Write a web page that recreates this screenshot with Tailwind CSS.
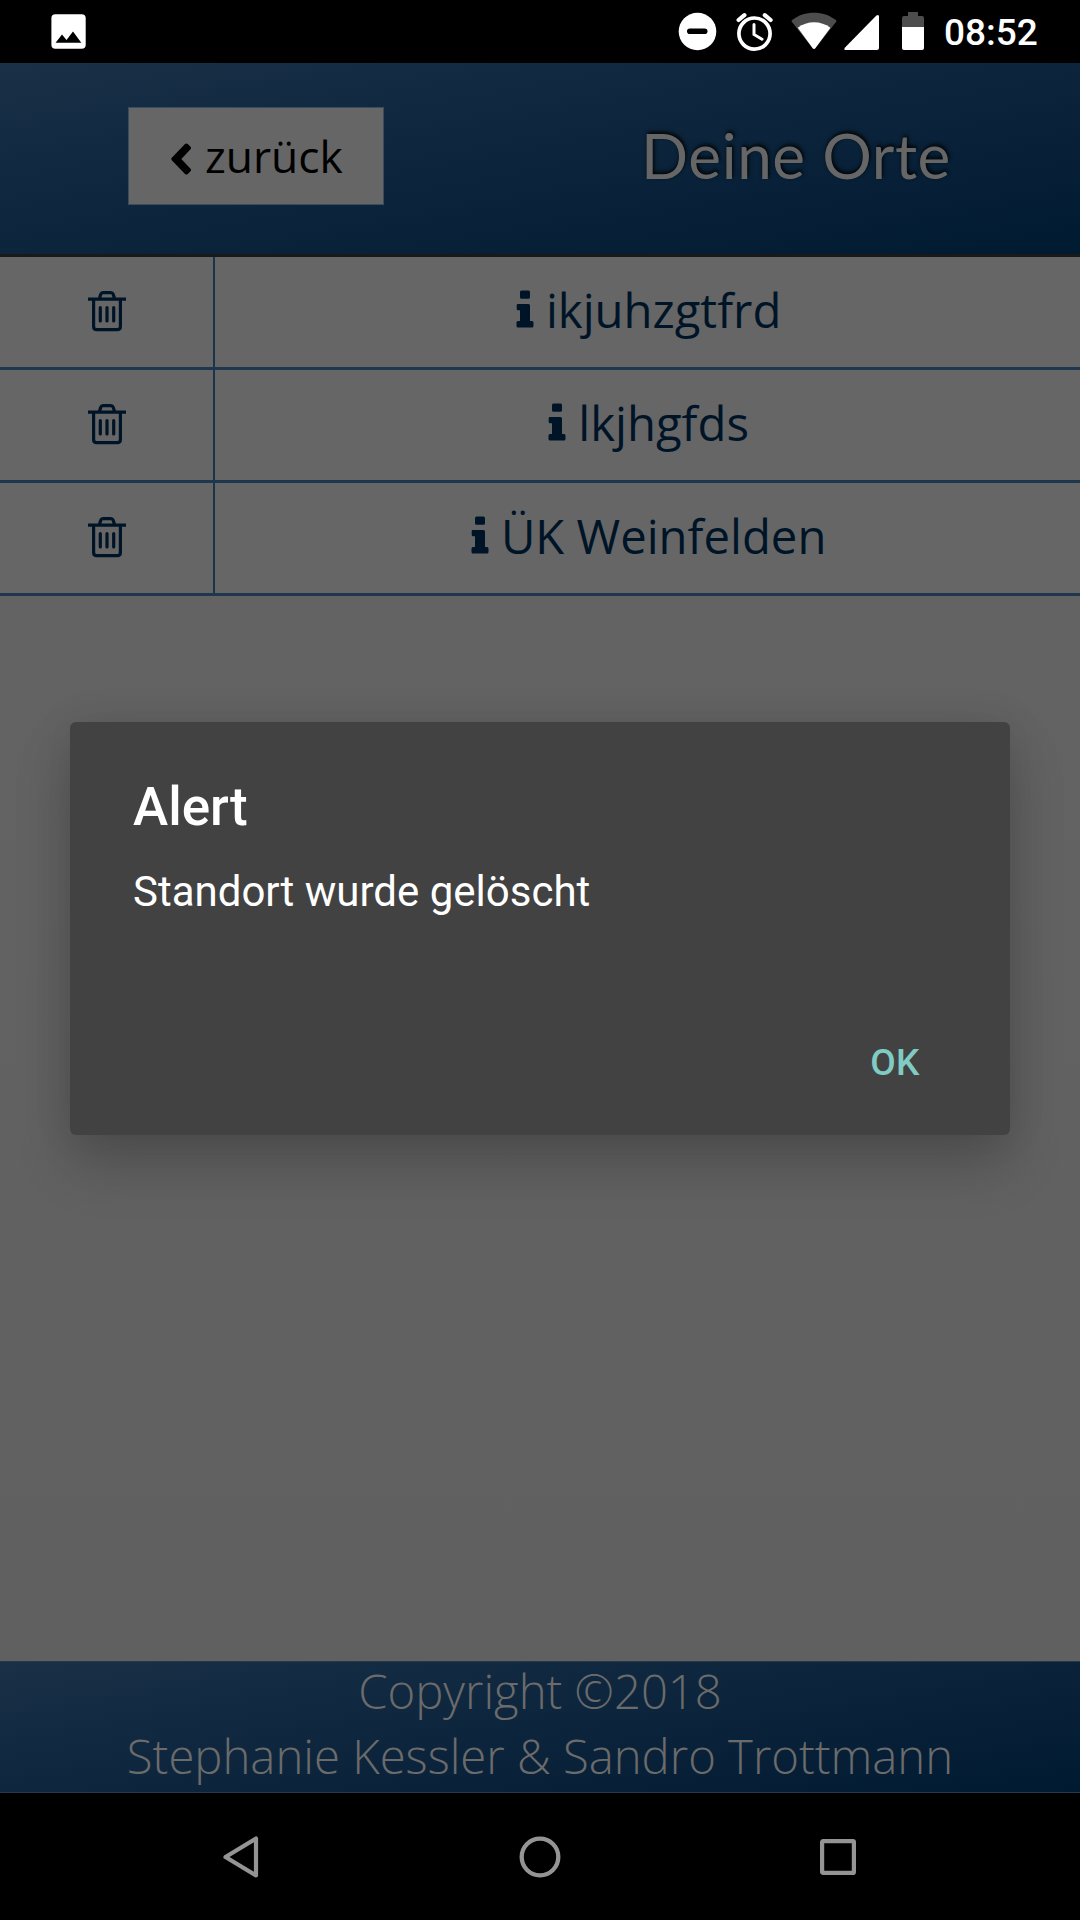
<!DOCTYPE html>
<html lang="de">
<head>
<meta charset="utf-8">
<title>Deine Orte</title>
<script src="https://cdn.jsdelivr.net/npm/@tailwindcss/browser@4"></script>
</head>
<body class="bg-black">
<svg class="hidden">
  <symbol id="trash" viewBox="0 0 38 42"><g fill="none" stroke="currentColor" stroke-width="3.2"><path d="M0 9.2H38M5.6 9V36.5Q5.6 39.6 8.700 39.600H29.300Q32.400 39.600 32.400 36.500V9M11.300 9L12.700 4.200Q13.300 2.600 15 2.600H22.900Q24.600 2.600 25.200 4.200L26.700 9"/><path d="M12.300 17.500V31M19 17.500V31M25.700 17.500V31" stroke-linecap="round"/></g></symbol>
  <symbol id="info" viewBox="0 0 18 38"><path fill="currentColor" d="M5.500 .5H12.500Q14 .5 14 2V7.200Q14 8.700 12.500 8.700H5.500Q4 8.700 4 7.200V2Q4 .5 5.500 .5ZM1.800 14H12.500Q14 14 14 15.500V31H16Q17.500 31 17.500 32.500V36Q17.500 37.500 16 37.500H2Q.5 37.500 .5 36V32.500Q.5 31 2 31H4V20.300H2Q.7 20.300 .7 18.800V15.300Q.7 14 1.800 14Z"/></symbol>
</svg>
<div class="relative flex h-[1920px] w-[1080px] flex-col overflow-hidden bg-[#626262] font-['Open_Sans',sans-serif]">
  <div class="flex h-[63px] shrink-0 items-start bg-black pl-[51px] text-white">
    <svg class="mt-[14px] h-[35px] w-[35px]" viewBox="0 0 35 35"><rect x=".4" y=".2" width="34.300" height="34.600" rx="4" fill="white"/><path d="M4.600 28.700L11 20.500L15.500 26L22 17.500L30.300 28.700Z" fill="black"/></svg>
    <svg class="ml-[592px] mt-[12px] h-[39px] w-[39px]" viewBox="0 0 39 39"><circle cx="19.500" cy="19.500" r="18.800" fill="white"/><rect x="9" y="16.500" width="20.500" height="5.600" rx="2.800" fill="black"/></svg>
    <svg class="ml-[19px] mt-[12px] h-[40px] w-[38px]" viewBox="0 0 38 40" fill="none" stroke="white"><circle cx="18.500" cy="21.600" r="15.600" stroke-width="3.700"/><path d="M18 12.500V22.500L26 27.200" stroke-width="3" stroke-linecap="round"/><path d="M2.600 8L8.400 3.100M28.800 3.100L34.600 8" stroke-width="4.200" stroke-linecap="round"/></svg>
    <svg class="ml-[17px] mt-[12px] h-[38px] w-[46px]" viewBox="0 0 46 38"><path d="M1 10Q0 9 1.200 8C13-1.800 33-1.800 44.800 8Q46 9 45 10L24.300 36.200Q23 37.600 21.700 36.200Z" fill="#4d4d4d"/><path d="M6.800 15.700C16 8.300 30 8.300 39.400 15.700L24.300 36.200Q23 37.600 21.700 36.200Z" fill="white"/></svg>
    <svg class="ml-[7px] mt-[14px] h-[37px] w-[36px]" viewBox="0 0 36 37"><path d="M1.300 33.300L32.400 1.600Q35 0 35 2.500V34Q35 36 33 36H2Q-1 36 1.300 33.300Z" fill="white"/></svg>
    <svg class="ml-[22px] mt-[12px] h-[38px] w-[22px]" viewBox="0 0 22 38"><path d="M6 0H16V4H20Q22 4 22 6V15H0V6Q0 4 2 4H6Z" fill="#4d4d4d"/><path d="M0 15H22V36Q22 38 20 38H2Q0 38 0 36Z" fill="white"/></svg>
    <span class="ml-[20px] mt-[11px] font-['Roboto'] text-[37px] leading-[44px] font-medium">08:52</span>
  </div>

  <header class="flex h-[194px] shrink-0 items-start border-b-[3px] border-[#191919] bg-[linear-gradient(170deg,#193047,#001a31)] pl-[128px] pt-[44px]">
    <button class="flex h-[98px] w-[256px] items-center border border-[#3a4d5e] bg-[#666] pl-[42px] text-[44.300px] text-black">
      <svg class="mt-[6px] h-[32px] w-[21px]" viewBox="0 0 21 32"><path d="M.8 14.800L14 1Q15.500-.2 16.800 1L19.500 3.800Q20.500 5 19.500 6.200L10.300 16L19.500 25.800Q20.500 27 19.500 28.200L16.800 31Q15.500 32.200 14 31L.8 17.200Q-.2 16 .8 14.800Z"/></svg>
      <span class="ml-[13px] leading-[60px]">zurück</span>
    </button>
    <h1 class="ml-[257px] mt-[10px] whitespace-nowrap font-['Lato'] text-[62px] leading-[76px] tracking-[0.600px] text-[#666] [text-shadow:1px_-2px_4px_#000]">Deine Orte</h1>
  </header>

  <main class="min-h-0 flex-1 bg-linear-to-b from-[#646464] to-[#606060]">
    <div class="grid h-[113px] grid-cols-[215px_1fr] border-b-[3px] border-[#1e374e] bg-[#666] text-[47.250px] text-[#001427]">
      <div class="flex items-center justify-center border-r-2 border-[#1a344c] pb-[2px]"><svg class="h-[42px] w-[38px]"><use href="#trash"/></svg></div>
      <div class="pl-[2px] pt-[20px] text-center leading-[66px]"><svg class="inline h-[38px] w-[18px] align-baseline"><use href="#info"/></svg> ikjuhzgtfrd</div>
    </div>
    <div class="grid h-[113px] grid-cols-[215px_1fr] border-b-[3px] border-[#1e374e] bg-[#666] text-[47.250px] text-[#001427]">
      <div class="flex items-center justify-center border-r-2 border-[#1a344c] pb-[2px]"><svg class="h-[42px] w-[38px]"><use href="#trash"/></svg></div>
      <div class="pl-[2px] pt-[20px] text-center leading-[66px]"><svg class="inline h-[38px] w-[18px] align-baseline"><use href="#info"/></svg> lkjhgfds</div>
    </div>
    <div class="grid h-[113px] grid-cols-[215px_1fr] border-b-[3px] border-[#1e374e] bg-[#666] text-[47.250px] text-[#001427]">
      <div class="flex items-center justify-center border-r-2 border-[#1a344c] pb-[2px]"><svg class="h-[42px] w-[38px]"><use href="#trash"/></svg></div>
      <div class="pl-[2px] pt-[20px] text-center leading-[66px]"><svg class="inline h-[38px] w-[18px] align-baseline"><use href="#info"/></svg> ÜK Weinfelden</div>
    </div>
  </main>

  <footer class="h-[132px] shrink-0 border-y border-[#26394a] bg-[linear-gradient(170deg,#193047,#001a31)] text-center text-[47.250px] font-light text-[#6b6b6b]">
    <p class="-mt-[4px] leading-[65px]">Copyright ©2018</p>
    <p class="leading-[65px]">Stephanie Kessler &amp; Sandro Trottmann</p>
  </footer>

  <nav class="flex h-[127px] shrink-0 items-center bg-black pl-[222px]">
    <svg class="h-[44px] w-[38px]" viewBox="0 0 38 44"><path d="M3.500 22L34 3.500V40.500Z" fill="none" stroke="#949494" stroke-width="4.200" stroke-linejoin="round"/></svg>
    <svg class="ml-[259px] h-[42px] w-[42px]" viewBox="0 0 42 42"><circle cx="21" cy="21" r="18.300" fill="none" stroke="#949494" stroke-width="4.300"/></svg>
    <svg class="ml-[259px] h-[36px] w-[36px]" viewBox="0 0 36 36"><rect x="2.100" y="2.100" width="31.800" height="31.800" rx="1" fill="none" stroke="#949494" stroke-width="4.200"/></svg>
  </nav>

  <div role="alertdialog" class="absolute left-[70px] top-[722px] flex h-[413px] w-[940px] flex-col rounded-[6px] bg-[#424242] px-[63px] font-['Roboto'] text-white shadow-[0_30px_56px_rgba(0,0,0,0.2),0_0_40px_rgba(0,0,0,0.08)]">
    <h2 class="mt-[54px] text-[53px] leading-[62px] font-medium">Alert</h2>
    <p class="mt-[29px] text-[42px] leading-[49px]">Standort wurde gelöscht</p>
    <button class="ml-auto mr-[27px] mt-[125px] text-[37px] leading-[43px] font-medium tracking-[0.500px] text-[#80cbc4]">OK</button>
  </div>
</div>
</body>
</html>
